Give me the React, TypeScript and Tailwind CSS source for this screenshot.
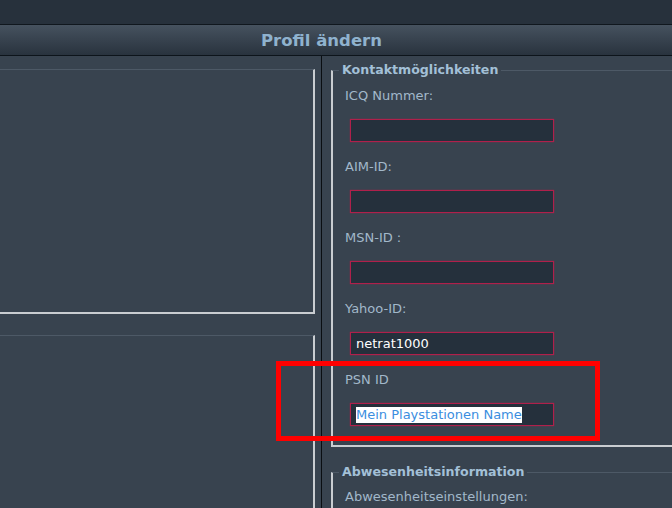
import React from 'react';

const fields = [
  { label: 'ICQ Nummer:', value: '' },
  { label: 'AIM-ID:', value: '' },
  { label: 'MSN-ID :', value: '' },
  { label: 'Yahoo-ID:', value: 'netrat1000' },
  { label: 'PSN ID', value: 'Mein Playstationen Name', selected: true },
];

const Field = ({ label, value, selected }: { label: string; value: string; selected?: boolean }) => (
  <div className="flex flex-col">
    <div className="h-[16px] leading-[16px] text-[13px] text-[#a2b8ca]">{label}</div>
    <div className="mt-[15px] mb-[17px] ml-[5px] w-[204px] h-[23px] border border-[#b0204b] bg-[#25303c] flex items-center px-[5px] text-[13px] leading-[16px] text-white shadow-[0_0_1px_#b0204b]">
      {selected ? <span className="bg-white text-[#3b8ee0]">{value}</span> : value}
    </div>
  </div>
);

const App = () => {
  return (
    <div
      className="relative w-[672px] h-[508px] overflow-hidden bg-[#38434f]"
      style={{ fontFamily: '"DejaVu Sans", Verdana, sans-serif' }}
    >
      {/* top bar */}
      <div className="h-[25px] bg-[#27313c] border-b border-[#10171e]" />

      {/* title bar */}
      <div className="h-[31px] bg-gradient-to-b from-[#46525f] to-[#29333e] border-b border-[#0d141b] flex items-center justify-center pr-[29px] pt-[3px]">
        <span className="text-[16.5px] font-bold text-[#8fb2ce]">Profil ändern</span>
      </div>

      <div className="flex">
        {/* left column */}
        <div className="w-[321px] shrink-0 pr-[6px] pt-[13px]">
          <div className="h-[245px] border-t border-[#4d5966] border-r-2 border-b-2 border-r-[#c9cdd1] border-b-[#c9cdd1]" />
          <div className="mt-[21px] h-[200px] border-t border-[#4d5966] border-r-2 border-r-[#c9cdd1]" />
        </div>

        {/* divider */}
        <div className="w-px bg-[#0a0e12] self-stretch h-[460px]" />

        {/* right column */}
        <div className="flex-1 pl-[9px] pt-[6px]">
          <fieldset className="border-t border-t-[#4d5966] border-l-2 border-b-2 border-l-[#c9cdd1] border-b-[#c9cdd1] border-r-0 pl-[12px] pb-[2px]">
            <legend className="ml-[-6px] px-[3px] text-[12.6px] leading-[16px] font-bold text-[#a3c0d7]">
              Kontaktmöglichkeiten
            </legend>
            <div className="pt-[10px]">
              {fields.map((f) => (
                <Field key={f.label} {...f} />
              ))}
            </div>
          </fieldset>

          <fieldset className="mt-[17px] border-t border-t-[#4d5966] border-l-2 border-l-[#c9cdd1] border-r-0 border-b-0 pl-[12px] h-[60px]">
            <legend className="ml-[-6px] px-[3px] text-[12.6px] leading-[16px] font-bold text-[#a3c0d7]">
              Abwesenheitsinformation
            </legend>
            <div className="pt-[9px] h-[16px] leading-[16px] text-[13px] text-[#a2b8ca]">Abwesenheitseinstellungen:</div>
          </fieldset>
        </div>
      </div>

      {/* annotation */}
      <div className="absolute left-[276px] top-[361px] w-[324px] h-[80px] border-[5px] border-[#ff0000]" />
    </div>
  );
};

export default App;
